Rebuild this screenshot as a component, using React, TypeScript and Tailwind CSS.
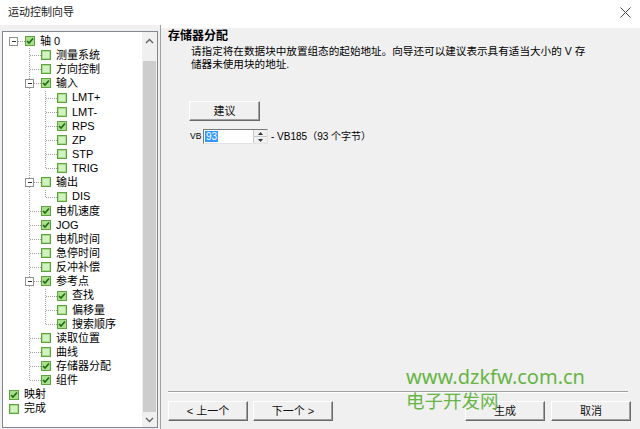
import React from "react";

type Item = {
  label: string;
  level: -1 | 0 | 1 | 2;
  checked: boolean;
  parent?: boolean;
  last?: boolean;
};

const items: Item[] = [
  { label: "轴 0", level: 0, checked: true, parent: true },
  { label: "测量系统", level: 1, checked: false },
  { label: "方向控制", level: 1, checked: false },
  { label: "输入", level: 1, checked: true, parent: true },
  { label: "LMT+", level: 2, checked: false },
  { label: "LMT-", level: 2, checked: false },
  { label: "RPS", level: 2, checked: true },
  { label: "ZP", level: 2, checked: false },
  { label: "STP", level: 2, checked: false },
  { label: "TRIG", level: 2, checked: false, last: true },
  { label: "输出", level: 1, checked: false, parent: true },
  { label: "DIS", level: 2, checked: false, last: true },
  { label: "电机速度", level: 1, checked: true },
  { label: "JOG", level: 1, checked: true },
  { label: "电机时间", level: 1, checked: false },
  { label: "急停时间", level: 1, checked: false },
  { label: "反冲补偿", level: 1, checked: false },
  { label: "参考点", level: 1, checked: true, parent: true },
  { label: "查找", level: 2, checked: true },
  { label: "偏移量", level: 2, checked: false },
  { label: "搜索顺序", level: 2, checked: true, last: true },
  { label: "读取位置", level: 1, checked: false },
  { label: "曲线", level: 1, checked: false },
  { label: "存储器分配", level: 1, checked: true },
  { label: "组件", level: 1, checked: true, last: true },
  { label: "映射", level: -1, checked: true },
  { label: "完成", level: -1, checked: false },
];

const dot = { stroke: "#a0a0a0", strokeWidth: 1, strokeDasharray: "1 1" };

// connector column: vertical guide, elbow and +/- box
function Connector({ item }: { item: Item }) {
  const root = item.level === 0;
  return (
    <svg width="20" height="14.15" className="shrink-0" shapeRendering="crispEdges">
      {!root && <line x1="8.5" y1="0" x2="8.5" y2={item.last ? 7.5 : 14.15} {...dot} />}
      <line x1={item.parent ? 12.5 : 8.5} y1="7.5" x2="20" y2="7.5" {...dot} />
      {item.parent && (
        <>
          <rect x="4.5" y="3.5" width="8" height="8" fill="#fff" stroke="#919191" />
          <line x1="6.5" y1="7.5" x2="10.5" y2="7.5" stroke="#333" />
        </>
      )}
    </svg>
  );
}

function Guide({ on }: { on: boolean }) {
  return (
    <svg width="16" height="14.15" className="shrink-0" shapeRendering="crispEdges">
      {on && <line x1="8.5" y1="0" x2="8.5" y2="14.15" {...dot} />}
    </svg>
  );
}

function Check({ checked }: { checked: boolean }) {
  return (
    <div className="w-[10px] h-[10px] shrink-0 border border-[#5fa33e] bg-[#a9df8c] flex items-center justify-center">
      {checked ? (
        <svg width="8" height="8" viewBox="0 0 8 8">
          <path d="M1 4 L3 6 L7 1.5" fill="none" stroke="#1d6b10" strokeWidth="1.6" />
        </svg>
      ) : (
        <div className="w-[6px] h-[6px] bg-[#d2f2c2]" />
      )}
    </div>
  );
}

function TreeRow({ item }: { item: Item }) {
  if (item.level === -1) {
    return (
      <div className="h-[14.15px] flex items-center pl-[6px]">
        <Check checked={item.checked} />
        <span className="ml-[5px] whitespace-nowrap">{item.label}</span>
      </div>
    );
  }
  return (
    <div className="h-[14.15px] flex items-center pl-[2px]">
      {item.level >= 1 && <Guide on={false} />}
      {item.level >= 2 && <Guide on={true} />}
      <Connector item={item} />
      <Check checked={item.checked} />
      <span className="ml-[5px] whitespace-nowrap">{item.label}</span>
    </div>
  );
}

function Btn({ children, className }: { children: React.ReactNode; className: string }) {
  return (
    <div
      className={`h-[20px] flex items-center justify-center bg-[#f0f0f0] border border-t-white border-l-white border-r-[#696969] border-b-[#696969] shadow-[inset_-1px_-1px_0_#a0a0a0] text-[11px] text-[#111] ${className}`}
    >
      {children}
    </div>
  );
}

export default function App() {
  return (
    <div className="relative w-[640px] h-[429px] overflow-hidden bg-[#f0f0f0] flex flex-col font-['Liberation_Sans','Noto_Sans_CJK_SC',sans-serif] text-[11px] text-black">
      {/* Title bar */}
      <div className="h-[25px] shrink-0 bg-white flex items-center justify-between pl-[8px] pr-[9px]">
        <span className="text-[11px] text-[#222]">运动控制向导</span>
        <svg width="11" height="11" viewBox="0 0 11 11">
          <path d="M0.5 0.5 L10.5 10.5 M10.5 0.5 L0.5 10.5" stroke="#444" strokeWidth="1" />
        </svg>
      </div>

      <div className="flex flex-1 min-h-0">
        {/* Tree */}
        <div className="w-[160px] shrink-0 flex pl-[2px] pt-[6px] pb-[1px]">
          <div className="w-[156px] flex border border-[#828790] bg-white">
            <div className="flex-1 pt-[2px] overflow-hidden">
              {items.map((it) => (
                <TreeRow key={it.label} item={it} />
              ))}
            </div>
            <div className="w-[15px] flex flex-col bg-[#f0f0f0]">
              <div className="h-[17px] flex items-center justify-center">
                <svg width="9" height="6" viewBox="0 0 9 6">
                  <path d="M1 5 L4.5 1.5 L8 5" fill="none" stroke="#606060" strokeWidth="1.3" />
                </svg>
              </div>
              <div className="flex-1 flex flex-col pt-[12px] px-[1px]">
                <div className="flex-1 bg-[#cdcdcd]" />
              </div>
              <div className="h-[15px] flex items-center justify-center">
                <svg width="9" height="6" viewBox="0 0 9 6">
                  <path d="M1 1 L4.5 4.5 L8 1" fill="none" stroke="#606060" strokeWidth="1.3" />
                </svg>
              </div>
            </div>
          </div>
        </div>
        <div className="w-[1px] bg-[#a0a0a0]" />

        {/* Page */}
        <div className="flex-1 flex flex-col">
          <div className="h-[3px] bg-white" />
          <div className="pl-[7px] pt-[1px] text-[12px] font-bold leading-[14px]">存储器分配</div>
          <div className="pl-[30px] mt-[2px] text-[10.6px] leading-[13px] whitespace-nowrap">
            请指定将在数据块中放置组态的起始地址。向导还可以建议表示具有适当大小的 V 存
            <br />
            储器未使用块的地址.
          </div>
          <div className="pl-[28px] mt-[30px]">
            <Btn className="w-[71px] h-[18px]">建议</Btn>
          </div>
          <div className="pl-[29px] mt-[8px] flex items-center text-[10px]">
            <span className="w-[13px] text-[8.5px]">VB</span>
            <div className="flex items-center h-[15px] w-[65px] border border-t-[#7a7a7a] border-l-[#7a7a7a] border-b-[#e3e3e3] border-r-[#e3e3e3] bg-white">
              <div className="flex-1 pl-[1px] flex items-center">
                <span className="bg-[#3399ff] text-white leading-[11px] px-[1px]">93</span>
              </div>
              <div className="w-[14px] h-full flex flex-col bg-[#f0f0f0] border-l border-[#c8c8c8]">
                <div className="flex-1 flex items-center justify-center border-b border-[#c8c8c8]">
                  <svg width="5" height="3" viewBox="0 0 5 3">
                    <path d="M0 3 L2.5 0 L5 3 Z" fill="#333" />
                  </svg>
                </div>
                <div className="flex-1 flex items-center justify-center">
                  <svg width="5" height="3" viewBox="0 0 5 3">
                    <path d="M0 0 L2.5 3 L5 0 Z" fill="#333" />
                  </svg>
                </div>
              </div>
            </div>
            <span className="ml-[3px] whitespace-nowrap">- VB185（93 个字节）</span>
          </div>

          <div className="flex-1" />
          <div className="ml-[7px] mr-[12px] h-[2px] border-t border-[#a0a0a0] border-b border-b-white" />
          <div className="flex items-center mt-[8px] mb-[8px] pl-[7px] pr-[9px]">
            <Btn className="w-[80px]">&lt; 上一个</Btn>
            <Btn className="w-[80px] ml-[5px]">下一个 &gt;</Btn>
            <div className="flex-1" />
            <Btn className="w-[80px]">生成</Btn>
            <Btn className="w-[80px] ml-[6px]">取消</Btn>
          </div>
        </div>
      </div>

      {/* Watermark */}
      <div className="absolute left-[406px] top-[365px] text-[#66b545] pointer-events-none">
        <div className="text-[20px] leading-[24px] font-['Noto_Sans',sans-serif]">www.dzkfw.com.cn</div>
        <div className="text-[18.5px] leading-[22px] font-['Noto_Sans_CJK_SC',sans-serif]">电子开发网</div>
      </div>
    </div>
  );
}
